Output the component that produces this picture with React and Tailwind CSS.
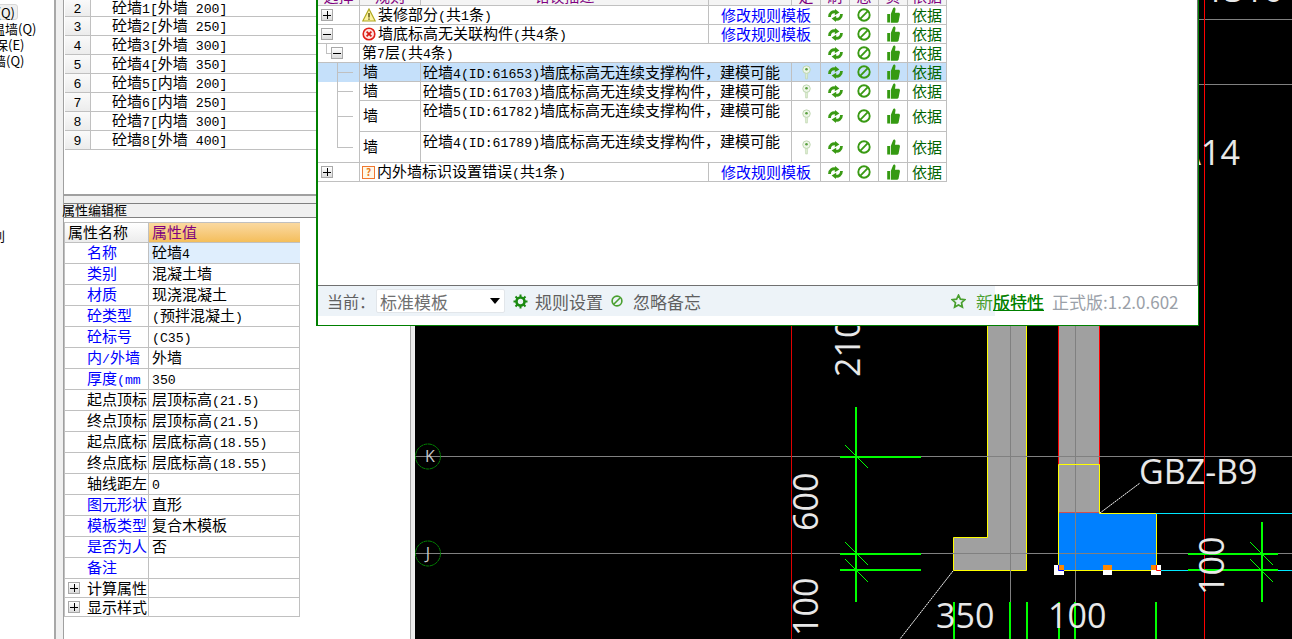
import React from "react";

const wallRows = [
  ["2", "砼墙1[外墙 200]"],
  ["3", "砼墙2[外墙 250]"],
  ["4", "砼墙3[外墙 300]"],
  ["5", "砼墙4[外墙 350]"],
  ["6", "砼墙5[内墙 200]"],
  ["7", "砼墙6[内墙 250]"],
  ["8", "砼墙7[内墙 300]"],
  ["9", "砼墙8[外墙 400]"],
];

const props = [
  ["名称", "砼墙4", true, true],
  ["类别", "混凝土墙", true],
  ["材质", "现浇混凝土", true],
  ["砼类型", "(预拌混凝土)", true],
  ["砼标号", "(C35)", true],
  ["内/外墙", "外墙", true],
  ["厚度(mm", "350", true],
  ["起点顶标", "层顶标高(21.5)"],
  ["终点顶标", "层顶标高(21.5)"],
  ["起点底标", "层底标高(18.55)"],
  ["终点底标", "层底标高(18.55)"],
  ["轴线距左", "0"],
  ["图元形状", "直形", true],
  ["模板类型", "复合木模板", true],
  ["是否为人", "否", true],
  ["备注", "", true],
];

const gridCols = "grid w-[629px] grid-cols-[42px_61px_288px_83px_29px_29px_29px_29px_39px]";
const cell = "flex items-center border-r border-b border-[#c0c0c0] overflow-hidden whitespace-nowrap";

// latin runs are half width in the original font, so they get a mono face
const Mixed = ({ text }) => (
  <span className="mb-[2px] block h-[15px] whitespace-pre leading-[15px]">
    {text.split(/([\x20-\x7e]+)/).map((part, i) =>
      i % 2 ? (
        <span key={i} className="font-['Liberation_Mono',monospace] text-[13.2px]">{part}</span>
      ) : (
        part
      )
    )}
  </span>
);

const TreeBox = ({ open, className = "" }) => (
  <span className={`flex h-[12px] w-[12px] items-center justify-center border border-[#a8a8a8] bg-gradient-to-b from-white to-[#dcdcdc] ${className}`}>
    <span className="relative block h-[1px] w-[8px] bg-black">
      {!open && <span className="absolute left-[3.5px] top-[-3.5px] block h-[8px] w-[1px] bg-black" />}
    </span>
  </span>
);

const WarnIcon = () => (
  <svg width="14" height="14" viewBox="0 0 14 14" className="shrink-0">
    <path d="M7 1 L13.2 13 H.8 Z" fill="#fdf3a0" stroke="#b0a820" strokeWidth="1.2" />
    <path d="M7 5v4.5M7 10.5v1.2" stroke="#55500a" strokeWidth="1.4" />
  </svg>
);

const ErrorIcon = () => (
  <svg width="14" height="14" viewBox="0 0 14 14" className="shrink-0">
    <circle cx="7" cy="7" r="5.8" fill="#fde3e0" stroke="#e02018" strokeWidth="1.6" />
    <path d="M4.6 4.6l4.8 4.8M9.4 4.6l-4.8 4.8" stroke="#d81810" strokeWidth="1.7" />
  </svg>
);

const QuestionIcon = () => (
  <span className="flex h-[13px] w-[13px] shrink-0 items-center justify-center border border-[#f07830] bg-[#fff8e8] text-[10px] font-bold leading-none text-[#e87820]">?</span>
);

const RefreshIcon = () => (
  <svg width="15" height="13" viewBox="0 0 15 13">
    <path d="M1.5 8C1.5 4 4.5 2 8 3" fill="none" stroke="#3a9a14" strokeWidth="2.8" />
    <path d="M7 0L11.4 3.6 6.8 6.2Z" fill="#3a9a14" />
    <path d="M13.5 5C13.5 9 10.5 11 7 10" fill="none" stroke="#3a9a14" strokeWidth="2.8" />
    <path d="M8 13L3.6 9.4l4.6-2.6Z" fill="#3a9a14" />
  </svg>
);

const BanIcon = ({ size = 14, color = "#3a9a14" }) => (
  <svg width={size} height={size} viewBox="0 0 14 14" className="shrink-0">
    <circle cx="7" cy="7" r="5.7" fill="none" stroke={color} strokeWidth="1.9" />
    <path d="M3.2 10.8L10.8 3.2" stroke={color} strokeWidth="1.9" />
  </svg>
);

const ThumbIcon = () => (
  <svg width="13" height="16" viewBox="0 0 13 15" preserveAspectRatio="none">
    <path
      d="M.2 6.5h2.8v8H.2z M3.8 6.5l2.2-5C6.6 0 8.6.2 8.5 2.2L8 5.5h3.6c1 0 1.5.9 1.3 1.8l-1.3 6.4c-.2.7-.7 1-1.3 1H3.8z"
      fill="#359a12"
    />
  </svg>
);

const PinIcon = () => (
  <svg width="9" height="15" viewBox="0 0 11 18">
    <path d="M4 9h3l-.4 8H4.4z" fill="#dcecd0" stroke="#b4d0a4" strokeWidth=".6" />
    <circle cx="5.5" cy="5.5" r="4.6" fill="#eef6e8" stroke="#b4d0a4" />
    <circle cx="5.5" cy="5" r="1.6" fill="#5aa040" />
  </svg>
);

const Actions = () => (
  <>
    <div className={`${cell} justify-center`}><RefreshIcon /></div>
    <div className={`${cell} justify-center`}><BanIcon /></div>
    <div className={`${cell} justify-center`}><ThumbIcon /></div>
    <div className={`${cell} justify-center pb-[2px] text-[#006400]`}>依据</div>
  </>
);

const GroupRow = ({ open, icon, title }) => (
  <div className={`${gridCols} h-[19px] text-[15px] leading-none`}>
    <div className={`${cell} pl-[3px]`}><TreeBox open={open} /></div>
    <div className={`${cell} col-span-2 gap-[2px] pl-[2px]`}>
      {icon}
      <span className="pb-[2px]"><Mixed text={title} /></span>
    </div>
    <div className={`${cell} col-span-2 pb-[2px] pl-[12px] text-[#0000ff]`}>修改规则模板</div>
    <Actions />
  </div>
);

const LeafRow = ({ text, h = "h-[19px]", selected, last }) => (
  <div className={`${gridCols} ${h} text-[15px] leading-none ${selected ? "bg-[#c5e0fa]" : ""}`}>
    <div className={`relative border-r border-[#c0c0c0] ${last ? "border-b" : ""}`}>
      <span className={`absolute left-[19px] top-0 w-px bg-[#c0c0c0] ${last ? "h-[15px]" : "h-full"}`} />
      <span className={`absolute left-[19px] h-px w-[16px] bg-[#c0c0c0] ${h === "h-[19px]" ? "top-[9px]" : "top-[15px]"}`} />
    </div>
    <div className={`${cell} pb-[3px] pl-[3px]`}>墙</div>
    <div className={`${cell} col-span-2 items-start pl-[2px] pt-[1px]`}>
      <Mixed text={text} />
    </div>
    <div className={`${cell} justify-center`}><PinIcon /></div>
    <Actions />
  </div>
);

const Cad = () => (
  <svg viewBox="415 0 877 639" width="877" height="639" className="block font-['Open_Sans',sans-serif]">
    <rect x="415" y="0" width="877" height="639" fill="#000" />
    <g stroke="#808080" strokeWidth="1">
      <path d="M415 19.5H1292M415 84.5H1292M415 456.5H1292M415 553.5H1292" />
    </g>
    <path d="M791.5 0V639" stroke="#e00000" strokeWidth="1" />
    <path d="M1204.5 0V639" stroke="#ff0000" strokeWidth="1" />

    <circle cx="428" cy="456.5" r="12.5" fill="none" stroke="#008000" strokeDasharray="4 .5" />
    <circle cx="428" cy="553.5" r="12.5" fill="none" stroke="#008000" strokeDasharray="4 .5" />
    <text x="430" y="462" fontSize="16" textAnchor="middle" fill="#c8c8c8">K</text>
    <text x="428" y="559" fontSize="16" textAnchor="middle" fill="#c8c8c8">J</text>

    <path d="M987.5 0H1026.5V570.5H953.5V537.5H987.5Z" fill="#a0a0a0" stroke="#ffff00" />
    <path d="M1058.5 0H1099.5V513H1058.5Z" fill="#a0a0a0" stroke="#ff0000" />
    <rect x="1058" y="513" width="98.5" height="57" fill="#0080ff" />
    <path d="M987 456.5H1027M953 553.5H1027M1058 456.5H1100M1058 553.5H1157" stroke="#808080" />
    <path d="M1010.5 0V602M1075.5 0V602" stroke="#808080" />
    <path d="M1058.5 464.5H1099.5V513.5H1156.5V570.5H1058.5Z" fill="none" stroke="#ffff00" />
    <path d="M1156 513.5H1292M1156 570.5H1292" stroke="#00e8ff" />

    <g fill="#fff">
      <rect x="1054" y="565" width="10" height="10" />
      <rect x="1103" y="565" width="9" height="10" />
      <rect x="1151" y="565" width="10" height="10" />
    </g>
    <g fill="#ff8800">
      <rect x="1059" y="565" width="5" height="5" />
      <rect x="1103" y="565" width="9" height="5" />
      <rect x="1151" y="565" width="5" height="5" />
    </g>
    <path d="M1058.5 565V570.5H1064" stroke="#0000ff" fill="none" />
    <path d="M1156.5 565V570.5H1161" stroke="#ff0000" fill="none" />

    <path d="M1100 513L1140 483M953 571L900 639" stroke="#fff" strokeDasharray="2 .6" />

    <g stroke="#00ff00" strokeWidth="2">
      <path d="M856 407V602M1262 522V602" />
      <path d="M840 457H921M840 554H921M840 570H921M1188 554H1278M1188 570H1278" />
      <path d="M954 602V639M1010 602V639M1027 602V639M1059 602V639M1075 602V639M1156 602V639" />
    </g>
    <g stroke="#00ff00" strokeWidth="1">
      <path d="M845 445L868 468M845 542L868 565M845 559L868 582M1250 542L1273 565M1250 559L1273 582" />
    </g>

    <g fill="#e8e8e8" fontSize="34">
      <text x="1139" y="484">GBZ-B9</text>
      <text x="1240" y="165" textAnchor="end">A14</text>
      <text x="1205" y="2">1316</text>
      <text x="936" y="628">350</text>
      <text x="1048" y="628">100</text>
      <text transform="translate(818 636) rotate(-90)">100</text>
      <text transform="translate(818 531) rotate(-90)">600</text>
      <text transform="translate(860 377) rotate(-90)">210</text>
      <text transform="translate(1224 595) rotate(-90)">100</text>
    </g>
  </svg>
);

const Dialog = () => (
  <div className="absolute left-[316px] top-[-14px] flex h-[340px] w-[883px] flex-col border-r border-b border-l-2 border-[#008000] bg-white">
    <div className="h-[300px] border-r border-b border-[#707070]">
      <div className={`${gridCols} h-[20px] text-[15px] leading-none text-[#800080]`}>
        {["选择", "规则", "错误描述", "", "定", "刷", "忽", "负", "依据"].map((label, i) => (
          <div key={i} className={`${cell} justify-center bg-[#f4f4f4]`}>{label}</div>
        ))}
      </div>
      <GroupRow icon={<WarnIcon />} title="装修部分(共1条)" />
      <GroupRow open icon={<ErrorIcon />} title="墙底标高无关联构件(共4条)" />
      <div className={`${gridCols} h-[19px] text-[15px] leading-none`}>
        <div className="relative border-r border-b border-[#c0c0c0]">
          <span className="absolute left-[8px] top-0 h-[9px] w-px bg-[#c0c0c0]" />
          <span className="absolute left-[8px] top-[9px] h-px w-[6px] bg-[#c0c0c0]" />
          <TreeBox open className="absolute left-[13px] top-[3px]" />
        </div>
        <div className={`${cell} col-span-4 pb-[2px] pl-[2px]`}><Mixed text="第7层(共4条)" /></div>
        <Actions />
      </div>
      <LeafRow selected text="砼墙4(ID:61653)墙底标高无连续支撑构件，建模可能" />
      <LeafRow text="砼墙5(ID:61703)墙底标高无连续支撑构件，建模可能" />
      <LeafRow h="h-[31px]" text="砼墙5(ID:61782)墙底标高无连续支撑构件，建模可能" />
      <LeafRow h="h-[31px]" last text="砼墙4(ID:61789)墙底标高无连续支撑构件，建模可能" />
      <GroupRow icon={<QuestionIcon />} title="内外墙标识设置错误(共1条)" />
    </div>
    <div className="flex h-[30px] items-center bg-[linear-gradient(90deg,#edf3f8_677px,#fff_677px)] pl-[9px] text-[16px] leading-none text-[#606060]">
      <span className="w-[49px]">当前：</span>
      <div className="flex h-[24px] w-[129px] items-center justify-between rounded-[2px] border border-[#e2e6ea] bg-white pl-[3px] pr-[4px]">
        <span className="text-[17px] text-[#707070]">标准模板</span>
        <span className="h-0 w-0 border-x-[5px] border-t-[6px] border-x-transparent border-t-black" />
      </div>
      <svg width="15" height="15" viewBox="0 0 15 15" className="ml-[8px] shrink-0">
        <circle cx="7.5" cy="7.5" r="4" fill="none" stroke="#1a8a10" strokeWidth="2.6" />
        <path d="M7.5 .5v3M7.5 11.5v3M.5 7.5h3M11.5 7.5h3M2.5 2.5l2 2M10.5 10.5l2 2M12.5 2.5l-2 2M4.5 10.5l-2 2" stroke="#1a8a10" strokeWidth="2" />
      </svg>
      <span className="ml-[7px] text-[17px]">规则设置</span>
      <span className="ml-[8px]"><BanIcon size={12} color="#4aa030" /></span>
      <span className="ml-[10px] text-[17px]">忽略备忘</span>
      <svg width="15" height="15" viewBox="0 0 15 15" className="ml-[250px] shrink-0">
        <path d="M7.5 1.2l1.9 4 4.4.5-3.3 3 .9 4.4-3.9-2.2-3.9 2.2.9-4.4-3.3-3 4.4-.5z" fill="none" stroke="#4aa030" strokeWidth="1.7" />
      </svg>
      <span className="relative ml-[10px] whitespace-nowrap text-[17px] text-[#4aa030]">
        新版特性
        <span className="absolute left-[17px] top-0 whitespace-nowrap text-[#008000] underline">版特性</span>
      </span>
      <span className="ml-[8px] whitespace-nowrap text-[17px] text-[#9aa0a8]">正式版:1.2.0.602</span>
    </div>
  </div>
);

export default function App() {
  return (
    <div className="relative flex h-[639px] w-[1292px] overflow-hidden bg-black font-['Noto_Sans_CJK_SC',sans-serif] text-black">
      <aside className="relative w-[54px] shrink-0 overflow-hidden bg-white text-[13px] leading-none">
        <div className="-ml-[4px] mt-[4px] flex h-[16px] w-[22px] items-center justify-end rounded-[3px] border border-[#d8d8d8] bg-[#f0f0f0] pr-[2px]">(Q)</div>
        <div className="-ml-[8px] mt-[2px] h-[16px] whitespace-nowrap">温墙(Q)</div>
        <div className="-ml-[5px] h-[16px] whitespace-nowrap">保(E)</div>
        <div className="-ml-[7px] h-[16px] whitespace-nowrap">墙(Q)</div>
        <div className="-ml-[8px] mt-[159px] whitespace-nowrap">别</div>
      </aside>

      <section className="flex w-[361px] shrink-0 border-l-2 border-[#a8a8a8] bg-[#f0f0f0]">
        <div className="w-[7px] shrink-0" />
        <div className="flex w-[347px] flex-col border-l border-[#a0a0a0] bg-white">
          <div className="h-[196px] shrink-0 border-b-2 border-[#a0a0a0] pl-[1px] text-[15px] leading-none">
            {wallRows.map(([n, name], i) => (
              <div key={n} className={`flex border-b border-[#c0c0c0] ${i === 0 ? "h-[17px]" : "h-[19px]"}`}>
                <div className="flex w-[26px] items-center justify-center border-r border-[#c0c0c0] bg-gradient-to-b from-[#fafafa] to-[#ececec] pb-[2px]"><Mixed text={n} /></div>
                <div className="flex items-center pb-[2px] pl-[21px]"><Mixed text={name} /></div>
              </div>
            ))}
          </div>
          <div className="h-[7px] shrink-0 bg-[#f0f0f0]" />
          <div className="flex h-[15px] shrink-0 items-center overflow-visible whitespace-nowrap border-y border-[#808080] bg-[#f0f0f0] pb-[2px] text-[13px] leading-none">
            <span className="-ml-[2px]">属性编辑框</span>
          </div>
          <div className="h-[4px] shrink-0" />
          <div className="w-[236px] border-t border-l border-[#c0c0c0] text-[15px] leading-none">
            <div className="grid h-[20px] grid-cols-[84px_151px] border-b border-r border-[#c0c0c0]">
              <div className="flex items-center border-r border-[#c0c0c0] bg-gradient-to-b from-white to-[#ececec] pb-[2px] pl-[3px]">属性名称</div>
              <div className="flex items-center bg-gradient-to-b from-[#fad9a0] to-[#f4be5a] pb-[2px] pl-[3px] text-[#800080]">属性值</div>
            </div>
            {props.map(([label, value, link, sel]) => (
              <div key={label + value} className="grid h-[21px] grid-cols-[84px_151px] border-b border-r border-[#c0c0c0]">
                <div className={`flex items-center overflow-hidden whitespace-nowrap border-r border-[#c0c0c0] pb-[2px] pl-[22px] ${link ? "text-[#0000ff]" : ""}`}><Mixed text={label} /></div>
                <div className={`flex items-center pb-[2px] pl-[3px] ${sel ? "bg-[#dfeefd]" : ""}`}><Mixed text={value} /></div>
              </div>
            ))}
            {["计算属性", "显示样式"].map((label) => (
              <div key={label} className="grid h-[19px] grid-cols-[84px_151px] border-b border-r border-[#c0c0c0]">
                <div className="flex items-center border-r border-[#c0c0c0] pl-[3px]">
                  <TreeBox />
                  <span className="ml-[7px] pb-[2px]">{label}</span>
                </div>
                <div />
              </div>
            ))}
          </div>
        </div>
        <div className="w-[4px] shrink-0 border-l border-[#a8a8a8] bg-[#ececec]" />
      </section>

      <main className="flex-1">
        <Cad />
      </main>

      <Dialog />
    </div>
  );
}
